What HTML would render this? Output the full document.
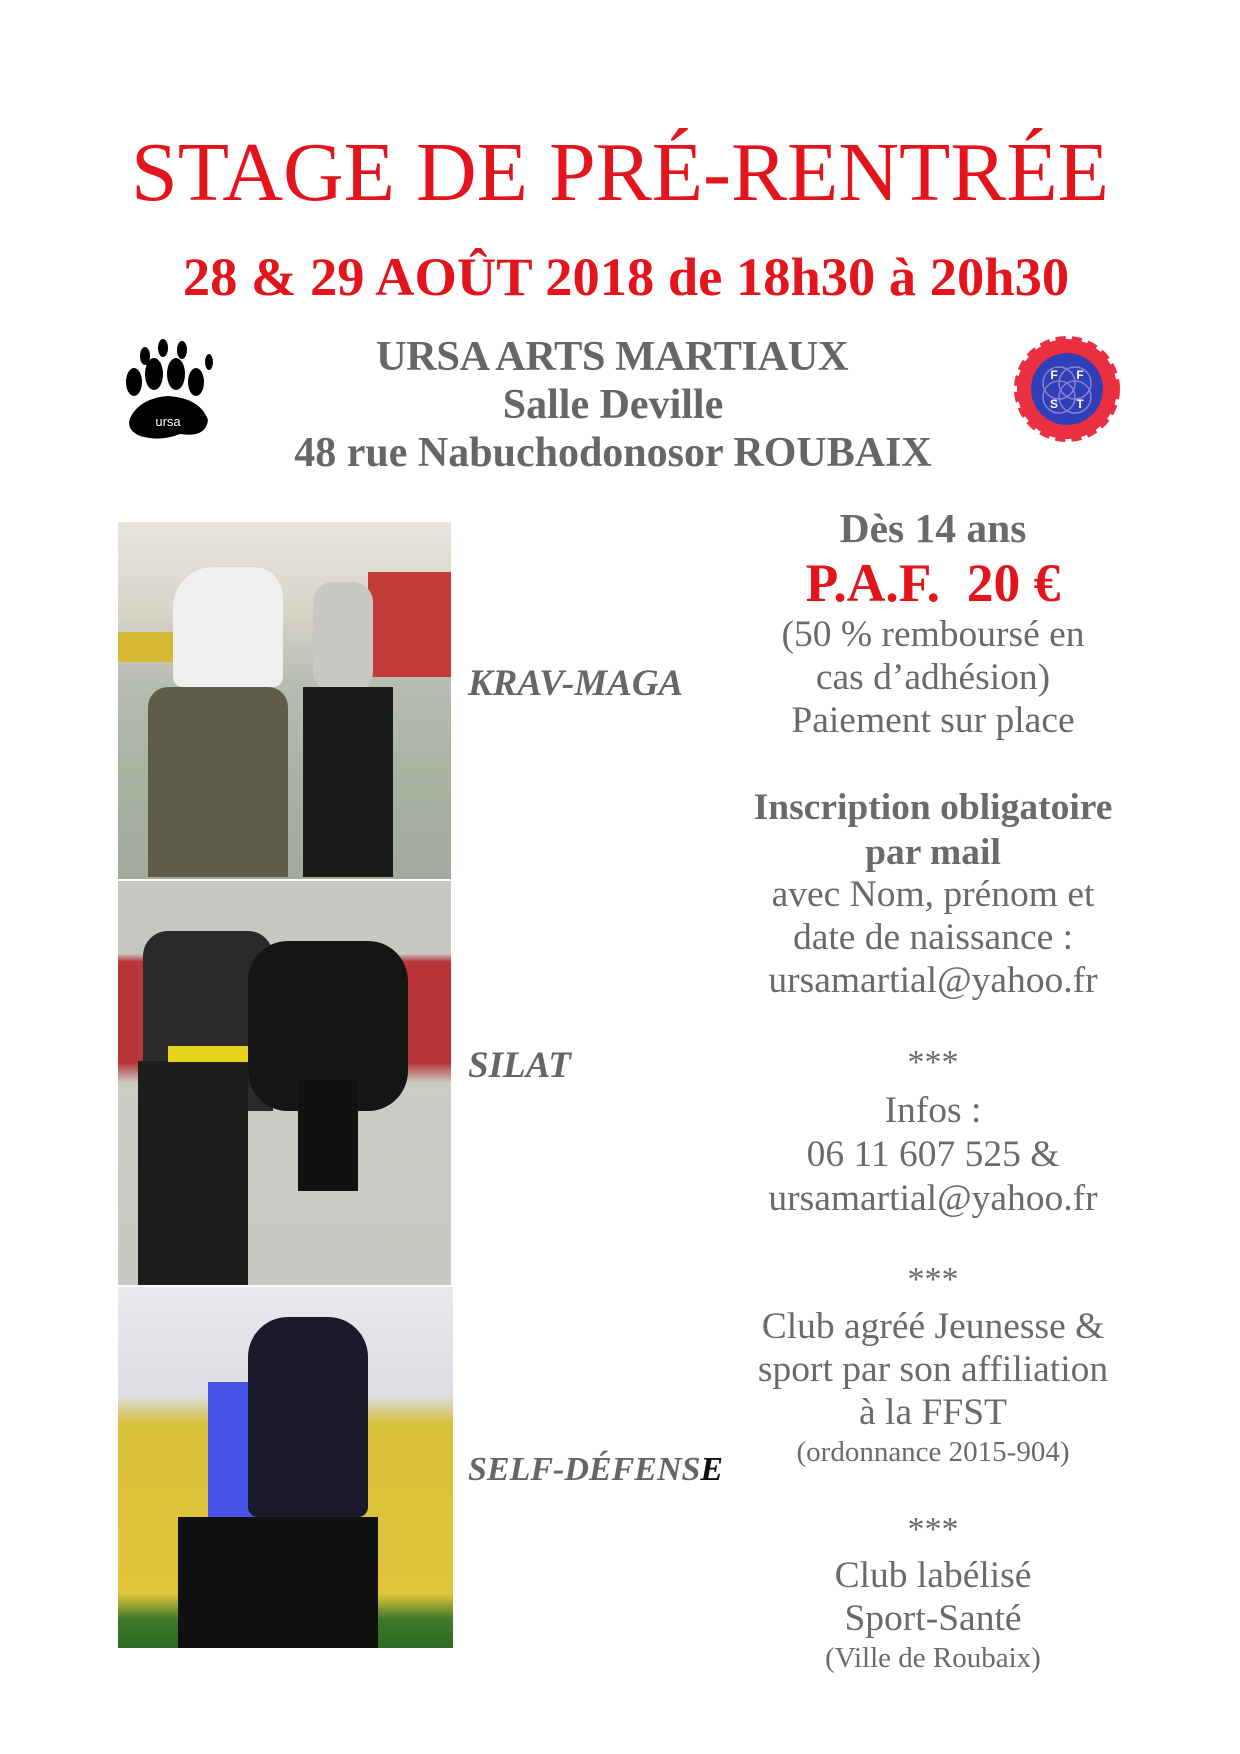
<!DOCTYPE html>
<html><head><meta charset="utf-8"><style>
html,body{margin:0;padding:0;background:#fff}
body{width:1240px;height:1754px;position:relative;overflow:hidden;font-family:"Liberation Serif",serif}
.l{position:absolute;left:0;width:1240px;text-align:center;white-space:nowrap}
.r{position:absolute;left:733px;width:400px;text-align:center;white-space:nowrap;color:#6a6a6a;font-size:37.5px;height:44px;line-height:44px}
.b{font-weight:bold}
.s{font-size:29px}
.st{font-size:34px}
.lab{position:absolute;left:468px;color:#666;font-style:italic;font-weight:bold;font-size:37px;height:40px;line-height:40px;white-space:nowrap}
.ph{position:absolute;overflow:hidden}
</style></head><body>
<div class="l" style="top:124px;font-size:84px;line-height:98px;color:#e3141b">STAGE DE PRÉ-RENTRÉE</div>
<div class="l b" style="top:245px;left:6px;font-size:54.5px;line-height:64px;color:#e3141b">28 &amp; 29 AOÛT 2018 de 18h30 à 20h30</div>
<div class="l b" style="top:332px;left:-8px;font-size:42.5px;line-height:50px;color:#666;letter-spacing:-0.5px">URSA ARTS MARTIAUX</div>
<div class="l b" style="top:380px;left:-7px;font-size:42px;line-height:50px;color:#666">Salle Deville</div>
<div class="l b" style="top:428px;left:-7px;font-size:42px;line-height:50px;color:#666">48 rue Nabuchodonosor ROUBAIX</div>

<svg style="position:absolute;left:120px;top:338px" width="108" height="108" viewBox="0 0 108 108">
<ellipse cx="25" cy="18" rx="5" ry="9" fill="#000"/><ellipse cx="43" cy="10" rx="5" ry="9" fill="#000"/><ellipse cx="62" cy="12" rx="5" ry="9" fill="#000"/>
<ellipse cx="14" cy="44" rx="8" ry="14" fill="#000"/><ellipse cx="34" cy="36" rx="9" ry="16" fill="#000"/><ellipse cx="56" cy="36" rx="9" ry="16" fill="#000"/><ellipse cx="76" cy="44" rx="8" ry="14" fill="#000"/>
<ellipse cx="89" cy="24" rx="4" ry="8" fill="#000"/>
<path d="M10 80 Q20 60 48 58 Q80 60 88 82 Q86 100 60 96 Q40 104 20 98 Q6 92 10 80Z" fill="#000"/>
<text x="48" y="88" font-family="Liberation Sans,sans-serif" font-size="13" fill="#fff" text-anchor="middle">ursa</text>
</svg>

<svg style="position:absolute;left:1014px;top:336px" width="106" height="106" viewBox="0 0 106 106">
<circle cx="53" cy="53" r="50" fill="#ea3040" stroke="#ea3040" stroke-width="6" stroke-dasharray="10 6"/>
<circle cx="53" cy="53" r="36" fill="#2f3fb8"/>
<circle cx="45" cy="47" r="16" fill="none" stroke="#8a7fd0" stroke-width="1.5"/><circle cx="61" cy="47" r="16" fill="none" stroke="#8a7fd0" stroke-width="1.5"/>
<circle cx="45" cy="61" r="16" fill="none" stroke="#8a7fd0" stroke-width="1.5"/><circle cx="61" cy="61" r="16" fill="none" stroke="#8a7fd0" stroke-width="1.5"/>
<g font-family="Liberation Sans,sans-serif" font-size="12" font-weight="bold" fill="#fff" text-anchor="middle"><text x="40" y="43">F</text><text x="66" y="43">F</text><text x="40" y="72">S</text><text x="66" y="72">T</text></g>
</svg>

<div class="ph" style="left:118px;top:522px;width:333px;height:357px;background:linear-gradient(180deg,#e8e5dc 0%,#d8d4c8 25%,#b7bdb0 45%,#a8b3a2 70%,#a3ab9c 100%)">
<div style="position:absolute;left:0;top:110px;width:70px;height:30px;background:#d6b832"></div>
<div style="position:absolute;left:250px;top:50px;width:83px;height:105px;background:#c33a3a"></div>
<div style="position:absolute;left:55px;top:45px;width:110px;height:120px;background:#efefef;border-radius:40px 30px 10px 10px"></div>
<div style="position:absolute;left:30px;top:165px;width:140px;height:190px;background:#5f5c4a;border-radius:20px 20px 0 0"></div>
<div style="position:absolute;left:195px;top:60px;width:60px;height:110px;background:#c9c7c2;border-radius:20px"></div>
<div style="position:absolute;left:185px;top:165px;width:90px;height:190px;background:#1a1a1a"></div>
</div>
<div class="ph" style="left:118px;top:881px;width:333px;height:404px;background:linear-gradient(180deg,#c8c6c0 0%,#c8c6c0 18%,#b8363a 20%,#b8363a 45%,#c9cdc4 50%,#c7c9c2 100%)">
<div style="position:absolute;left:25px;top:50px;width:130px;height:180px;background:#2a2a2a;border-radius:25px 25px 0 0"></div>
<div style="position:absolute;left:20px;top:180px;width:110px;height:224px;background:#1d1d1d"></div>
<div style="position:absolute;left:50px;top:165px;width:80px;height:16px;background:#e6d41c"></div>
<div style="position:absolute;left:130px;top:60px;width:160px;height:170px;background:#151515;border-radius:40px"></div>
<div style="position:absolute;left:180px;top:200px;width:60px;height:110px;background:#111"></div>
</div>
<div class="ph" style="left:118px;top:1287px;width:335px;height:361px;background:linear-gradient(180deg,#e9eaf0 0%,#dcdde4 30%,#d8c13a 38%,#e0c53a 85%,#3f7a2a 92%,#2d6b22 100%)">
<div style="position:absolute;left:90px;top:95px;width:70px;height:150px;background:#4853e8"></div>
<div style="position:absolute;left:130px;top:30px;width:120px;height:200px;background:#1a1a2a;border-radius:40px 40px 10px 10px"></div>
<div style="position:absolute;left:60px;top:230px;width:200px;height:131px;background:#111"></div>
</div>

<div class="lab" style="top:664px">KRAV-MAGA</div>
<div class="lab" style="top:1046px">SILAT</div>
<div class="lab" style="top:1450px;font-size:34px">SELF-DÉFENS<span style="color:#111">E</span></div>

<div class="r b" style="top:504px;font-size:41.5px;height:48px;line-height:48px">Dès 14 ans</div>
<div class="r b" style="top:554px;font-size:53.5px;height:58px;line-height:58px;color:#e3141b">P.A.F.&nbsp; 20 €</div>
<div class="r" style="top:613px">(50 % remboursé en</div>
<div class="r" style="top:656px">cas d’adhésion)</div>
<div class="r" style="top:699px">Paiement sur place</div>
<div class="r b" style="top:786px">Inscription obligatoire</div>
<div class="r b" style="top:831px">par mail</div>
<div class="r" style="top:873px">avec Nom, prénom et</div>
<div class="r" style="top:916px">date de naissance :</div>
<div class="r" style="top:959px">ursamartial@yahoo.fr</div>
<div class="r st" style="top:1041px">***</div>
<div class="r" style="top:1089px">Infos :</div>
<div class="r" style="top:1133px">06 11 607 525 &amp;</div>
<div class="r" style="top:1177px">ursamartial@yahoo.fr</div>
<div class="r st" style="top:1258px">***</div>
<div class="r" style="top:1305px">Club agréé Jeunesse &amp;</div>
<div class="r" style="top:1348px">sport par son affiliation</div>
<div class="r" style="top:1391px">à la FFST</div>
<div class="r s" style="top:1430px">(ordonnance 2015-904)</div>
<div class="r st" style="top:1508px">***</div>
<div class="r" style="top:1554px">Club labélisé</div>
<div class="r" style="top:1597px">Sport-Santé</div>
<div class="r s" style="top:1636px">(Ville de Roubaix)</div>
</body></html>
